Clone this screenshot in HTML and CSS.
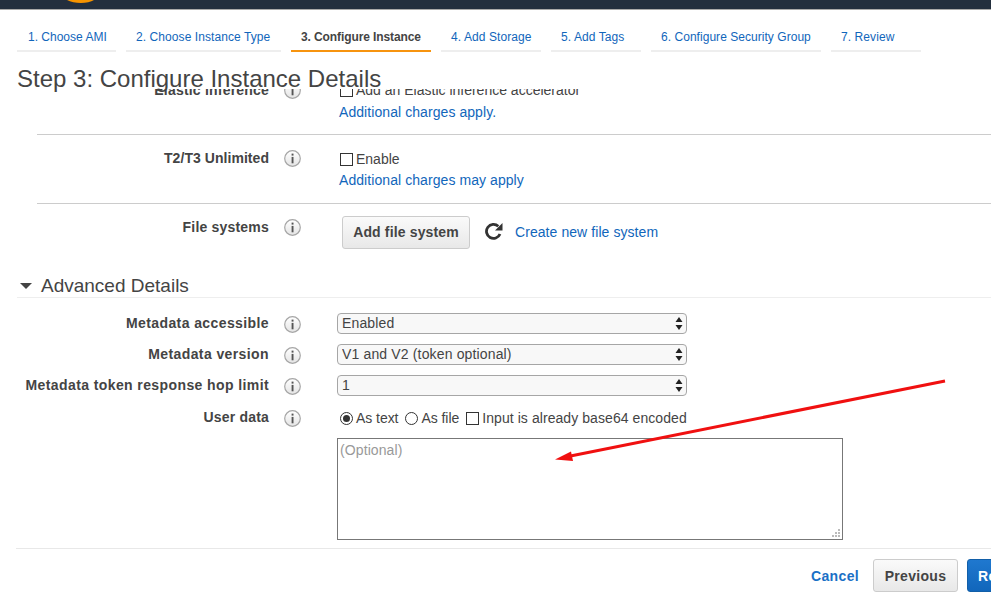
FILE: index.html
```html
<!DOCTYPE html>
<html lang="en">
<head>
    <meta charset="UTF-8">
    <title>Step 3: Configure Instance Details</title>
    <link rel="stylesheet" href="styles.css">
</head>
<body>
    <svg width="0" height="0" class="defs">
        <defs>
            <linearGradient id="infoFill" x1="0" y1="0" x2="0" y2="1">
                <stop offset="0" stop-color="#ffffff"/>
                <stop offset="1" stop-color="#e4e4e4"/>
            </linearGradient>
            <symbol id="info" viewBox="0 0 17 17">
                <circle cx="8.5" cy="8.5" r="7.8" fill="url(#infoFill)" stroke="#a6a6a6" stroke-width="1.2"/>
                <rect x="7.6" y="3.6" width="1.9" height="2" fill="#555"/>
                <rect x="7.6" y="6.9" width="1.9" height="6.4" fill="#555"/>
            </symbol>
            <symbol id="updown" viewBox="0 0 8 14">
                <path d="M4 0.5 L7.5 5.5 H0.5 Z M4 13.5 L0.5 8.5 H7.5 Z" fill="#222"/>
            </symbol>
        </defs>
    </svg>

    <header class="top-bar">
        <svg class="smile" width="27" height="3" viewBox="0 0 27 3"><path d="M0 0 H27 C21 4 7 4 0 0 Z" fill="#f79400"/></svg>
    </header>

    <nav class="tabs">
        <a class="tab tab-1">1. Choose AMI</a>
        <a class="tab tab-2">2. Choose Instance Type</a>
        <a class="tab tab-3 active">3. Configure Instance</a>
        <a class="tab tab-4">4. Add Storage</a>
        <a class="tab tab-5">5. Add Tags</a>
        <a class="tab tab-6">6. Configure Security Group</a>
        <a class="tab tab-7">7. Review</a>
    </nav>

    <h1 class="page-title">Step 3: Configure Instance Details</h1>

    <main class="scroller">
        <div class="row row-elastic">
            <div class="label">Elastic inference</div>
            <svg class="info"><use href="#info"/></svg>
            <div class="field">
                <div class="check-line"><span class="box"></span>Add an Elastic inference accelerator</div>
                <a class="link link-elastic">Additional charges apply.</a>
            </div>
        </div>
        <hr class="sep">
        <div class="row row-unlimited">
            <div class="label">T2/T3 Unlimited</div>
            <svg class="info"><use href="#info"/></svg>
            <div class="field">
                <div class="check-line"><span class="box"></span>Enable</div>
                <a class="link link-unlimited">Additional charges may apply</a>
            </div>
        </div>
        <hr class="sep sep-second">
        <div class="row row-files">
            <div class="label">File systems</div>
            <svg class="info"><use href="#info"/></svg>
            <div class="field file-actions">
                <button class="btn btn-add">Add file system</button>
                <svg class="reload" width="18" height="18" viewBox="0 0 18 18">
                    <path d="M15 12 A7 7 0 1 1 13.3 4.3" fill="none" stroke="#333" stroke-width="2.8"/>
                    <path d="M17.5 1 V8.5 H10 Z" fill="#333"/>
                </svg>
                <a class="link">Create new file system</a>
            </div>
        </div>

        <h2 class="section-title"><span class="caret"></span>Advanced Details</h2>

        <div class="row row-select">
            <div class="label">Metadata accessible</div>
            <svg class="info"><use href="#info"/></svg>
            <div class="select-wrap">
                <select><option>Enabled</option></select>
                <svg class="updown"><use href="#updown"/></svg>
            </div>
        </div>
        <div class="row row-select">
            <div class="label">Metadata version</div>
            <svg class="info"><use href="#info"/></svg>
            <div class="select-wrap">
                <select><option>V1 and V2 (token optional)</option></select>
                <svg class="updown"><use href="#updown"/></svg>
            </div>
        </div>
        <div class="row row-select">
            <div class="label">Metadata token response hop limit</div>
            <svg class="info"><use href="#info"/></svg>
            <div class="select-wrap">
                <select><option>1</option></select>
                <svg class="updown"><use href="#updown"/></svg>
            </div>
        </div>
        <div class="row row-user">
            <div class="label">User data</div>
            <svg class="info"><use href="#info"/></svg>
            <div class="field">
                <div class="radio-line">
                    <span class="radio checked"></span><span class="opt">As text</span>
                    <span class="radio"></span><span class="opt">As file</span>
                    <span class="box"></span><span class="base64">Input is already base64 encoded</span>
                </div>
                <div class="textarea-wrap">
                    <textarea class="user-data" placeholder="(Optional)"></textarea>
                    <svg class="grip" width="8" height="8" viewBox="0 0 8 8">
                        <path d="M6 0h2v2H6z M3 3h2v2H3z M6 3h2v2H6z M0 6h2v2H0z M3 6h2v2H3z M6 6h2v2H6z" fill="#bbb"/>
                    </svg>
                </div>
            </div>
        </div>
    </main>

    <footer class="actions">
        <a class="cancel">Cancel</a>
        <button class="btn btn-prev">Previous</button>
        <button class="btn btn-next">Review and Launch</button>
    </footer>

    <!-- red annotation arrow drawn over the screenshot -->
    <svg class="annotation" width="991" height="603" viewBox="0 0 991 603">
        <line x1="945" y1="381" x2="568" y2="456.5" stroke="#f01010" stroke-width="3"/>
        <path d="M555 459.5 L571 451.5 L573 461 Z" fill="#f01010"/>
    </svg>
</body>
</html>
```

FILE: styles.css
```css
* {
    box-sizing: border-box;
}

html, body {
    margin: 0;
    height: 603px;
    overflow: hidden;
}

body {
    width: 991px;
    position: relative;
    display: flex;
    flex-direction: column;
    background: #fff;
    color: #444;
    font-family: "Liberation Sans", Arial, sans-serif;
    font-size: 14px;
}

.defs {
    position: absolute;
}

.top-bar {
    flex: none;
    height: 10px;
    background: #232f3e;
    border-bottom: 1px solid #a9a9a9;
    padding-left: 67px;
}

.smile {
    display: block;
}

/* wizard tabs */
.tabs {
    flex: none;
    display: flex;
    gap: 10px;
    height: 42px;
    padding-left: 17px;
}

.tab {
    height: 42px;
    padding: 20px 0 0 10px;
    font-size: 12px;
    line-height: 14px;
    letter-spacing: 0.08px;
    color: #1166bb;
    border-bottom: 2px solid #eee;
}

.tab-1 { width: 99px; padding-left: 11px; letter-spacing: 0; }
.tab-2 { width: 155px; }
.tab-3 { width: 140px; }
.tab-4 { width: 100px; }
.tab-5 { width: 90px; }
.tab-6 { width: 170px; letter-spacing: 0.04px; }
.tab-7 { width: 90px; }

.tab.active {
    color: #444;
    font-weight: bold;
    letter-spacing: -0.1px;
    border-bottom-color: #f7940f;
}

.page-title {
    flex: none;
    height: 37px;
    margin: 0;
    padding: 13px 0 0 17px;
    font-size: 24px;
    line-height: 28px;
    font-weight: normal;
    color: #444;
}

/* clipped, scrolled part of the form */
.scroller {
    flex: none;
    height: 459px;
    overflow: hidden;
}

.row {
    display: grid;
    grid-template-columns: 269px 68px 1fr;
}

.label {
    text-align: right;
    font-weight: bold;
    font-size: 14px;
    line-height: 16px;
    letter-spacing: 0.2px;
    white-space: nowrap;
}

.info {
    width: 17px;
    height: 17px;
    margin-left: 15px;
}

.link {
    color: #1166bb;
    letter-spacing: 0.07px;
}

.row-elastic {
    margin-top: -7px;
    height: 52px;
}

.sep {
    margin: 0 0 0 37px;
    border: 0;
    border-top: 1px solid #ccc;
}

.row-unlimited {
    height: 68px;
    padding-top: 15px;
}

.row-unlimited .label {
    letter-spacing: 0.05px;
}

.row-unlimited .field {
    margin-top: 1px;
}

.check-line {
    display: flex;
    align-items: center;
    height: 16px;
    padding-left: 3px;
    line-height: 16px;
}

.box {
    display: inline-block;
    flex: none;
    width: 13px;
    height: 13px;
    margin-right: 3px;
    border: 1px solid #333;
    background: #fff;
}

.field > .link {
    display: block;
    padding-left: 2px;
    line-height: 16px;
    margin-top: 5px;
}

.row-elastic .link {
    margin-top: 6px;
}

.row-files {
    height: 68px;
    padding-top: 15px;
}

.file-actions {
    display: flex;
    align-items: flex-start;
    padding-left: 5px;
    margin-top: -3px;
}

.btn {
    height: 33px;
    padding: 0;
    border: 1px solid #ccc;
    border-radius: 3px;
    background: linear-gradient(#fafafa, #e8e8e8);
    color: #444;
    font-family: inherit;
    font-size: 14px;
    font-weight: bold;
    letter-spacing: 0.3px;
}

.btn-add {
    width: 128px;
    margin-right: 15px;
    padding-bottom: 1px;
    letter-spacing: 0.15px;
}

.reload {
    margin: 6px 10px 0 0;
}

.file-actions .link {
    line-height: 16px;
    margin-top: 8px;
}

.section-title {
    display: flex;
    align-items: center;
    height: 26px;
    margin: 0 0 15px 17px;
    padding-top: 3px;
    font-size: 19px;
    font-weight: normal;
    line-height: 22px;
    border-bottom: 1px solid #eee;
}

.caret {
    width: 0;
    height: 0;
    margin: 0 9px 0 3px;
    border-left: 6px solid transparent;
    border-right: 6px solid transparent;
    border-top: 6px solid #444;
}

.row-select {
    height: 31px;
}

.row-select .label {
    padding-top: 2px;
    letter-spacing: 0.4px;
}

.row-select .info {
    margin-top: 3px;
}

.select-wrap {
    position: relative;
    width: 350px;
    height: 21px;
}

select {
    display: block;
    width: 100%;
    height: 21px;
    padding: 0 0 1px 4px;
    appearance: none;
    border: 1px solid #a6a6a6;
    border-radius: 4px;
    background: #f8f8f8;
    color: #444;
    font-family: inherit;
    font-size: 14px;
    letter-spacing: 0.15px;
}

.updown {
    position: absolute;
    right: 4px;
    top: 3px;
    width: 8px;
    height: 15px;
}

.row-user {
    margin-top: 1px;
}

.row-user .label {
    padding-top: 2px;
}

.row-user .info {
    margin-top: 3px;
}

.row-user .field {
    margin-top: 3px;
}

.radio-line {
    display: flex;
    align-items: center;
    height: 16px;
    padding-left: 3px;
    white-space: nowrap;
}

.radio {
    position: relative;
    flex: none;
    width: 13px;
    height: 13px;
    margin-right: 3px;
    border: 1px solid #333;
    border-radius: 50%;
}

.radio.checked::after {
    content: "";
    position: absolute;
    left: 2px;
    top: 2px;
    width: 7px;
    height: 7px;
    border-radius: 50%;
    background: #333;
}

.opt {
    margin-right: 7px;
    letter-spacing: -0.05px;
}

.base64 {
    letter-spacing: 0.07px;
}

.textarea-wrap {
    position: relative;
    width: 506px;
    height: 102px;
    margin-top: 12px;
}

.user-data {
    display: block;
    width: 100%;
    height: 100%;
    padding: 3px 2px;
    border: 1px solid #777;
    resize: none;
    font-family: inherit;
    font-size: 14px;
    letter-spacing: 0.1px;
    color: #444;
}

.user-data::placeholder {
    color: #999;
}

.grip {
    position: absolute;
    right: 3px;
    bottom: 3px;
}

.actions {
    flex: none;
    display: flex;
    align-items: flex-start;
    height: 55px;
    margin-left: 16px;
    padding: 10px 0 0 795px;
    border-top: 1px solid #e8e8e8;
}

.cancel {
    margin-top: 9px;
    margin-right: 14px;
    color: #1a70c6;
    font-weight: bold;
    line-height: 16px;
    letter-spacing: 0.35px;
}

.btn-prev {
    flex: none;
    width: 85px;
    margin-right: 9px;
}

.btn-next {
    flex: none;
    width: 150px;
    padding-left: 10px;
    text-align: left;
    border-color: #125fa8;
    background: linear-gradient(#1f78cf, #1166bb);
    color: #fff;
    white-space: nowrap;
}

.annotation {
    position: absolute;
    left: 0;
    top: 0;
    pointer-events: none;
}
```
